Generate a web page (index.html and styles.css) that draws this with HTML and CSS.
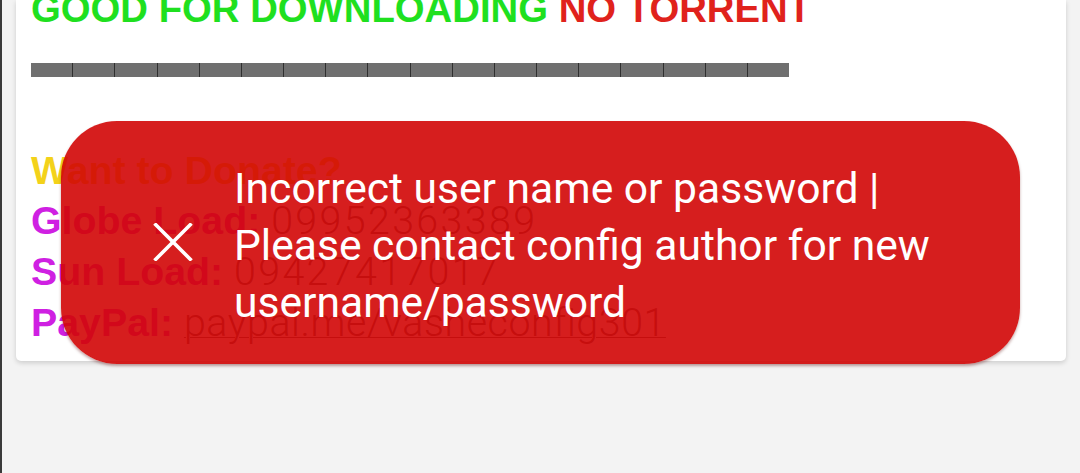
FILE: index.html
```html
<!DOCTYPE html>
<html lang="en">
<head>
<meta charset="utf-8">
<title>Config</title>
<link rel="stylesheet" href="styles.css">
</head>
<body>
<div class="page">
  <div class="card">
    <h1 class="headline"><span class="good">GOOD FOR DOWNLOADING</span> <span class="bad">NO TORRENT</span></h1>
    <div class="bar">
      <span></span><span></span><span></span><span></span><span></span><span></span>
      <span></span><span></span><span></span><span></span><span></span><span></span>
      <span></span><span></span><span></span><span></span><span></span><span></span>
    </div>
    <div class="donate">
      <p class="line"><span class="ask">Want to Donate?</span></p>
      <p class="line"><span class="label">Globe Load:</span> <span class="num">09952363389</span></p>
      <p class="line"><span class="label">Sun Load:</span> <span class="num">09427417017</span></p>
      <p class="line"><span class="label">PayPal:</span> <a class="link" href="#">paypal.me/vasheconfig301</a></p>
    </div>
  </div>

  <div class="toast">
    <svg class="toast-icon" viewBox="0 0 40 38" width="40" height="38" aria-hidden="true">
      <path d="M1.5 0.5 L38.5 37.5 M38.5 0.5 L1.5 37.5" stroke="#ffffff" stroke-width="3.6" stroke-linecap="butt" fill="none"/>
    </svg>
    <p class="toast-text">Incorrect user name or password | Please contact config author for new username/password</p>
  </div>
</div>
</body>
</html>
```

FILE: styles.css
```css
html, body {
  margin: 0;
  padding: 0;
  height: 100%;
  overflow: hidden;
}

body {
  background: #f3f3f3;
  font-family: "Liberation Sans", Arial, sans-serif;
}

.page {
  position: relative;
  height: 100%;
  border-left: 2px solid #3a3a3a;
  padding-left: 14px;
  padding-right: 14px;
}

.card {
  background: #ffffff;
  border-radius: 0 0 5px 5px;
  box-shadow: 0 2px 5px rgba(0, 0, 0, 0.16);
  padding: 0 15px 13px 15px;
  overflow: hidden;
}

.headline {
  margin: -13px 0 0 0;
  font-size: 38.3px;
  line-height: 44px;
  font-weight: 700;
  white-space: nowrap;
}

.good { color: #1fe01f; }
.bad { color: #e0221c; }

.bar {
  margin-top: 32px;
  width: 758px;
  height: 14px;
  display: flex;
}

.bar span {
  flex: 1;
  background: #6f6f6f;
  border-left: 1px solid #2f2f2f;
}

.bar span:first-child {
  border-left: none;
}

.donate {
  margin-top: 68px;
}

.line {
  margin: 0;
  font-size: 39.3px;
  line-height: 50px;
  white-space: nowrap;
}

.ask {
  color: #f3d21a;
  font-weight: 700;
}

.label {
  color: #cf20e2;
  font-weight: 700;
}

.num {
  font-family: Roboto, "Liberation Sans", sans-serif;
  font-weight: 300;
  color: #5a5a5a;
  letter-spacing: 2.4px;
}

.link {
  font-family: Roboto, "Liberation Sans", sans-serif;
  font-weight: 300;
  color: #5a5a5a;
  letter-spacing: 0.6px;
  text-decoration: underline;
  text-decoration-thickness: 1px;
}

.toast {
  position: absolute;
  left: 59px;
  top: 121px;
  width: 959px;
  height: 243px;
  box-sizing: border-box;
  border-radius: 56px;
  background: rgba(210, 6, 6, 0.9);
  box-shadow: 0 2px 3px rgba(90, 0, 0, 0.35);
  display: flex;
  align-items: center;
  padding-left: 92px;
  gap: 41px;
}

.toast-icon {
  flex: none;
  margin-top: -2px;
}

.toast-text {
  margin: 0;
  padding-top: 5px;
  width: 740px;
  font-family: Roboto, "Liberation Sans", sans-serif;
  font-size: 42.6px;
  line-height: 57px;
  color: #ffffff;
}
```
